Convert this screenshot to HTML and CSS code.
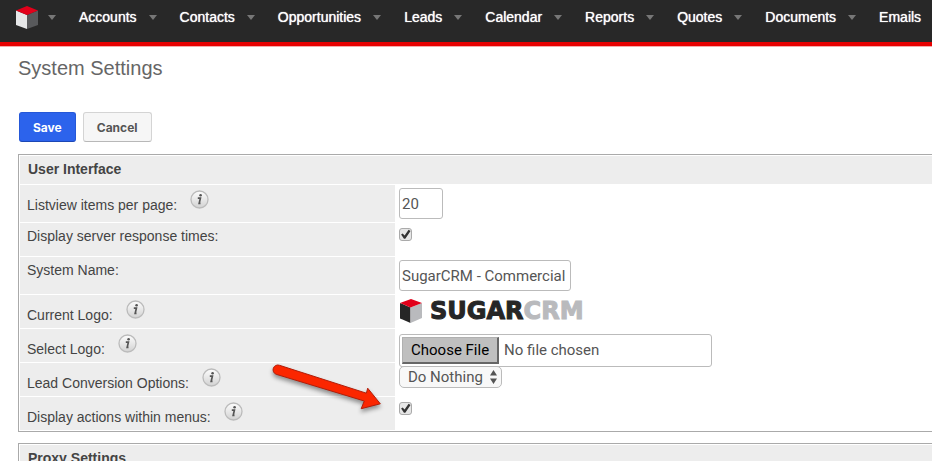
FILE: index.html
```html
<!DOCTYPE html>
<html lang="en">
<head>
    <meta charset="UTF-8" />
    <meta name="viewport" content="width=device-width, initial-scale=1.0" />
    <title>System Settings</title>
    <link rel="stylesheet" href="styles.css">
</head>
<body>
    <svg width="0" height="0" class="defs" aria-hidden="true">
        <defs>
            <linearGradient id="tip-fill" x1="0" y1="0" x2="0" y2="1">
                <stop offset="0" stop-color="#fdfdfd" />
                <stop offset="1" stop-color="#d2d2d2" />
            </linearGradient>
            <symbol id="info" viewBox="0 0 19 19">
                <circle cx="9.5" cy="9.5" r="8.5" fill="url(#tip-fill)" stroke="#bbb" stroke-width="1.3" />
                <circle cx="10.6" cy="5.3" r="1.3" fill="#555" />
                <path d="M7.8 8.2h2.6L9.2 13.4h1.3" fill="none" stroke="#555" stroke-width="1.7" />
            </symbol>
        </defs>
    </svg>

    <nav>
        <a href="#" class="home" aria-label="Home">
            <svg width="22" height="23" viewBox="0 0 22 23">
                <path d="M0 4.5L11 9v14L0 19z" fill="#e6e7e8" />
                <path d="M22 4.5L11 9v14l11-4z" fill="#58595b" />
                <path d="M11 0l11 4.5L11 9 0 4.5z" fill="#e2001a" />
            </svg>
            <i class="caret"></i>
        </a>
        <a href="#">Accounts<i class="caret"></i></a>
        <a href="#">Contacts<i class="caret"></i></a>
        <a href="#">Opportunities<i class="caret"></i></a>
        <a href="#">Leads<i class="caret"></i></a>
        <a href="#">Calendar<i class="caret"></i></a>
        <a href="#">Reports<i class="caret"></i></a>
        <a href="#">Quotes<i class="caret"></i></a>
        <a href="#">Documents<i class="caret"></i></a>
        <a href="#">Emails<i class="caret"></i></a>
    </nav>

    <main>
        <h1>System Settings</h1>

        <form>
            <div class="actions">
                <button type="button" class="btn primary">Save</button>
                <button type="button" class="btn">Cancel</button>
            </div>

            <div class="panel">
                <table>
                    <tr><th colspan="2" class="title">User Interface</th></tr>
                    <tr class="tall">
                        <th scope="row">
                            <div class="tip">
                                <label for="list-items">Listview items per page:</label>
                                <button type="button" aria-label="Help"><svg><use href="#info" /></svg></button>
                            </div>
                        </th>
                        <td><input type="text" id="list-items" class="text short" value="20"></td>
                    </tr>
                    <tr>
                        <th scope="row"><label for="response-times">Display server response times:</label></th>
                        <td><input type="checkbox" id="response-times" checked></td>
                    </tr>
                    <tr class="tall">
                        <th scope="row"><label for="system-name">System Name:</label></th>
                        <td><input type="text" id="system-name" class="text" value="SugarCRM - Commercial"></td>
                    </tr>
                    <tr>
                        <th scope="row">
                            <div class="tip">
                                <span>Current Logo:</span>
                                <button type="button" aria-label="Help"><svg><use href="#info" /></svg></button>
                            </div>
                        </th>
                        <td>
                            <div class="logo">
                                <svg width="22" height="24" viewBox="0 0 22 24">
                                    <path d="M0 4l10.500 4.500V24L0 19.500z" fill="#262626" />
                                    <path d="M22 4L10.500 8.500V24L22 19z" fill="#b9babd" />
                                    <path d="M11 0l11 4-11.500 4.500L0 4z" fill="#e2001a" />
                                </svg>
                                <span>SUGAR<b>CRM</b></span>
                            </div>
                        </td>
                    </tr>
                    <tr>
                        <th scope="row">
                            <div class="tip">
                                <label for="logo-file">Select Logo:</label>
                                <button type="button" aria-label="Help"><svg><use href="#info" /></svg></button>
                            </div>
                        </th>
                        <td><input type="file" id="logo-file"></td>
                    </tr>
                    <tr>
                        <th scope="row">
                            <div class="tip">
                                <label for="lead-options">Lead Conversion Options:</label>
                                <button type="button" aria-label="Help"><svg><use href="#info" /></svg></button>
                            </div>
                        </th>
                        <td>
                            <div class="select">
                                <select id="lead-options">
                                    <option>Do Nothing</option>
                                </select>
                                <svg width="7" height="14" viewBox="0 0 7 14">
                                    <path d="M3.500 0L7 5.500H0zM3.500 14L0 8.500h7z" fill="#555" />
                                </svg>
                            </div>
                        </td>
                    </tr>
                    <tr>
                        <th scope="row">
                            <div class="tip">
                                <label for="menu-actions">Display actions within menus:</label>
                                <button type="button" aria-label="Help"><svg><use href="#info" /></svg></button>
                            </div>
                        </th>
                        <td><input type="checkbox" id="menu-actions" checked></td>
                    </tr>
                </table>

                <!-- pointer to the menu actions checkbox -->
                <svg class="arrow" width="120" height="56" viewBox="0 0 120 56">
                    <path d="M11.500 5.300L98.400 33.200 99.700 28.200 112.300 43.800 93.200 48.700 96.300 41 8.200 14.300A4.700 4.700 0 0 1 11.500 5.300z" fill="#fb2600" stroke="#b01c08" stroke-linejoin="round" />
                </svg>
            </div>

            <div class="panel">
                <table>
                    <tr><th colspan="2" class="title">Proxy Settings</th></tr>
                </table>
            </div>
        </form>
    </main>
</body>
</html>
```
FILE: styles.css
```css
body {
    margin: 0;
    height: 100vh;
    overflow: hidden;
    background: #fff;
    color: #444;
    font-family: "Liberation Sans", Arial, sans-serif;
    font-size: 14px;
}

.defs {
    position: absolute;
}

nav {
    display: flex;
    height: 42px;
    padding-left: 16px;
    background: #282828;
    border-bottom: 4px solid #e60000;
    box-shadow: 0 1px 0 #f5a9a9;
}

nav a {
    display: flex;
    flex: none;
    height: 34px;
    align-items: center;
    margin-right: 23px;
    color: #fff;
    text-decoration: none;
    text-shadow: 0 0 1px #fff;
}

.caret {
    margin-left: 12px;
    border: 4px solid transparent;
    border-top: 5px solid #777;
    border-bottom: 0;
}

.home .caret {
    margin-left: 10px;
}

main {
    padding: 10px 0 0 18px;
}

h1 {
    margin: 0 0 32px;
    color: #666;
    font-size: 20px;
    font-weight: normal;
    line-height: 24px;
}

.actions {
    display: flex;
    gap: 7px;
    margin: 0 0 12px 1px;
}

.btn {
    height: 30px;
    padding: 0 13px;
    border: 1px solid #d4d4d4;
    border-bottom-color: #b8b8b8;
    border-radius: 3px;
    background: #f6f6f6;
    color: #555;
    font-family: Inter, sans-serif;
    font-size: 12px;
    font-weight: bold;
}

.btn.primary {
    border-color: #2558d8;
    border-bottom-color: #1c47b5;
    background: #2c63ec;
    color: #fff;
}

.panel {
    position: relative;
    margin: 0 -4px 11px 0;
}

table {
    width: 100%;
    border: 1px solid #aaa;
    border-spacing: 1px;
}

tr {
    height: 33px;
}

tr.tall {
    height: 37px;
}

th,
td {
    box-sizing: border-box;
    padding: 0 3px;
    text-align: left;
    vertical-align: top;
}

th {
    width: 375px;
    padding: 5px 7px 0;
    background: #ededed;
    font-weight: normal;
    line-height: 16px;
}

.title {
    width: auto;
    height: 28px;
    padding: 5px 8px 0;
    font-weight: bold;
}

tr:has(.title) {
    height: 28px;
}

.tip {
    display: flex;
    gap: 13px;
    height: 24px;
}

.tip label,
.tip span {
    padding-top: 7px;
}

.tip button {
    width: 19px;
    height: 19px;
    padding: 0;
    border: 0;
    background: none;
}

.tip svg {
    display: block;
    width: 19px;
    height: 19px;
}

input,
select {
    display: block;
    box-sizing: border-box;
    margin: 0;
    color: #555;
    font-family: Roboto, sans-serif;
    font-size: 15px;
}

.text {
    width: 172px;
    height: 31px;
    margin-top: 3px;
    padding: 0 2px;
    border: 1px solid #bbb;
    border-radius: 3px;
}

.short {
    width: 44px;
}

input[type="checkbox"] {
    width: 13px;
    height: 13px;
    margin-top: 5px;
    appearance: none;
    border: 1px solid #aaa;
    border-radius: 3px;
    background: #e6e6e6;
}

input[type="checkbox"]:checked::before {
    content: "";
    display: block;
    width: 11px;
    height: 11px;
    background: #333;
    clip-path: polygon(10% 50%, 24% 40%, 42% 58%, 78% 6%, 96% 18%, 48% 88%, 36% 88%);
}

.logo {
    display: flex;
    gap: 8px;
    padding: 4px 1px 0;
    color: #262626;
    font-family: "DejaVu Sans", Verdana, sans-serif;
    font-size: 24px;
    font-weight: bold;
    line-height: 24px;
    -webkit-text-stroke: 1px;
}

.logo b {
    color: #b9babd;
}

/* taller than its row, runs into the next one */
input[type="file"] {
    width: 313px;
    height: 33px;
    margin: 5px 0 -6px;
    padding: 2px;
    border: 1px solid #bbb;
    border-radius: 3px;
}

input[type="file"]::file-selector-button {
    height: 27px;
    margin-right: 5px;
    padding: 0 8px;
    border: 1px solid #b0b0b0;
    border-right: 2px solid #666;
    border-bottom: 2px solid #666;
    background: #bfbfbf;
    color: #000;
    font-family: Roboto, sans-serif;
    font-size: 15px;
}

.select {
    position: relative;
    width: 103px;
    margin-top: 3px;
}

select {
    width: 100%;
    height: 22px;
    padding: 0 8px;
    appearance: none;
    border: 1px solid #bbb;
    border-radius: 5px;
    background: #f8f8f8;
}

.select svg {
    position: absolute;
    top: 4px;
    right: 5px;
    pointer-events: none;
}

.arrow {
    position: absolute;
    top: 206px;
    left: 250px;
    filter: drop-shadow(0 3px 2px rgba(0, 0, 0, 0.4));
    pointer-events: none;
}
```
